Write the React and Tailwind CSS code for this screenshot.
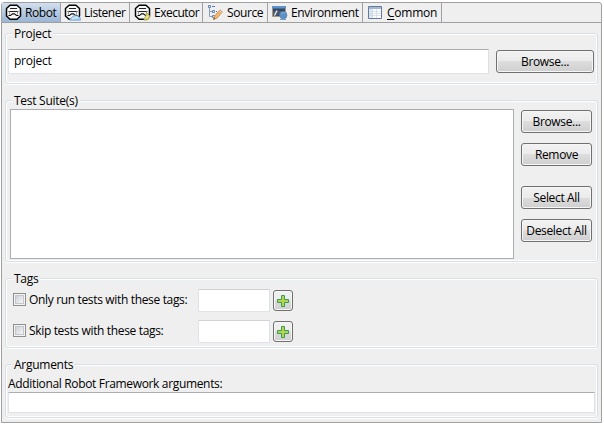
import React from "react";

function RobotIcon({ children }) {
  return (
    <svg width="17" height="17" viewBox="0 0 17 17" className="shrink-0">
      <path d="M5 1.200h7l3.500 3.300v7.500L12 15.300H5L1.500 12V4.500z" fill="#f8f8f8" stroke="#050505" strokeWidth="1.500" strokeLinejoin="round" />
      <path d="M5 4.500h7" stroke="#222" strokeWidth="1" fill="none" />
      <path d="M3.500 7.500h10" stroke="#222" strokeWidth="1" fill="none" />
      <path d="M4.500 7.500v3M12.500 7.500v3" stroke="#999" strokeWidth="1" fill="none" />
      <path d="M3.500 11.500h2l2-1.600h2l2 1.600h2" stroke="#111" strokeWidth="1.100" fill="none" />
      {children}
    </svg>
  );
}

const ListenerIcon = () => (
  <RobotIcon>
    <path d="M5.500 16.200c.4-2 1.800-2.600 3-3 .5-2 3.300-2.800 4.500-1 2-.2 3.500 1 3.500 4z" fill="#a9d2f4" stroke="#4d88c4" strokeWidth=".6" />
    <path d="M8 15c2-1 4-1.400 6-2" stroke="#e9f6ff" fill="none" />
  </RobotIcon>
);

const ExecutorIcon = () => (
  <RobotIcon>
    <path d="M12.500 8.500l3.500 3.500-1.500 3.500-4 .8-1-1.800 2-1.500z" fill="#d5cf6c" stroke="#8d8b3c" strokeWidth=".6" />
    <path d="M11.500 14l2.500-2" stroke="#fff8b8" />
  </RobotIcon>
);

const SourceIcon = () => (
  <svg width="16" height="17" viewBox="0 0 16 17" className="shrink-0">
    <path d="M2.500 4v8.500H5M2.500 7.500H5" fill="none" stroke="#8a9cb6" />
    <g fill="#e8f1fb" stroke="#6486b6">
      <path d="M1.500 1.500h2v2h-2zM5.500 6.500h2v2h-2zM5.500 11.500h2v2h-2z" />
    </g>
    <path d="M5 2.500h3M9 7.500h1" stroke="#5478ad" />
    <path d="M6.500 15.500l1-3.500L13 5.900l2.400 2L9.900 14.300z" fill="#f4b56c" stroke="#c9854a" strokeWidth=".8" />
    <path d="M6.500 15.500l.5-1.800 1.300 1z" fill="#443" />
    <path d="M12.300 6.600l2.400 2.100" stroke="#e9d8cc" />
  </svg>
);

const EnvironmentIcon = () => (
  <svg width="16" height="17" viewBox="0 0 16 17" className="shrink-0">
    <path d="M.5 2.500h13v10H.5z" fill="#34495f" stroke="#a9987c" />
    <path d="M0 2h14v2.500H0z" fill="#5c93cd" />
    <path d="M1 12V7h11L4 12z" fill="#4c5c70" />
    <path d="M2.500 11.500l2.500-5" stroke="#eef4fa" strokeWidth="1.200" />
    <circle cx="11.300" cy="11.200" r="3.700" fill="#5c8fc6" stroke="#5584b6" strokeWidth=".6" />
    <path d="M9 10c1-1.500 3-1.800 4-.8" stroke="#8fb6de" fill="none" />
    <path d="M8 15.500h6" stroke="#7d9dc0" />
  </svg>
);

const CommonIcon = () => (
  <svg width="15" height="15" viewBox="0 0 15 15" className="shrink-0">
    <path d="M.5 1.500h13v12H.5z" fill="#fff" stroke="#64799b" />
    <path d="M1 2h12v2H1z" fill="#a3b6d2" />
    <path d="M1 4h3v9H1z" fill="#dce7f4" />
    <path d="M4.500 4v9M1 6.500h12M1 8.500h12M1 10.500h12M8.500 4v9" stroke="#c9d4e1" strokeWidth=".7" />
  </svg>
);

const PlusIcon = () => (
  <svg width="12" height="12" viewBox="0 0 12 12" className="shrink-0">
    <path d="M4.500 .5h3v4h4v3h-4v4h-3v-4h-4v-3h4z" fill="#b4d64a" stroke="#3b9a5c" strokeWidth="1" />
  </svg>
);

function Tab({ icon, children, className }) {
  return (
    <div className={`flex h-[19px] shrink-0 items-center border-r border-[#a0a0a0] ${className}`}>
      {icon}
      <span className="whitespace-nowrap">{children}</span>
    </div>
  );
}

function Group({ title, className, children }) {
  return (
    <fieldset className={`relative w-[593px] shrink-0 rounded-[3px] border border-[#d5dfe5] shadow-[inset_0_0_0_1px_#fff,0_1px_0_#fff] ${className}`}>
      <span className="absolute -top-2 left-[6px] bg-[#efefef] px-[2px] leading-4 tracking-[-0.27px] whitespace-nowrap">{title}</span>
      {children}
    </fieldset>
  );
}

function Button({ children, className }) {
  return (
    <button className={`flex h-[23px] shrink-0 items-center justify-center rounded-[3px] border border-[#707070] bg-[linear-gradient(#f2f2f2_0%,#ebebeb_50%,#dddddd_50%,#cfcfcf_100%)] whitespace-nowrap shadow-[inset_0_0_0_1px_#f6f6f6] ${className}`}>
      {children}
    </button>
  );
}

function Field({ children, className }) {
  return (
    <div className={`flex shrink-0 items-center rounded-[1px] border border-[#e2e3ea] border-t-[#abadb3] border-r-[#dbdfe6] bg-white ${className}`}>
      {children}
    </div>
  );
}

function TagRow({ label }) {
  return (
    <div className="flex h-[23px] items-center">
      <span className="-mt-[2px] ml-[7px] flex h-[13px] w-[13px] items-center justify-center border border-[#8e8f8f] bg-[#f4f4f4]">
        <span className="h-[9px] w-[9px] border border-[#c3c7cc] bg-linear-to-br from-[#cdd1d8] to-[#f6f6f6]" />
      </span>
      <span className="-mt-px ml-[3px] w-[169px] whitespace-nowrap">{label}</span>
      <Field className="h-[23px] w-[72px] border-t-[#d0d2d8]" />
      <Button className="ml-[3px] !h-[21px] w-5"><PlusIcon /></Button>
    </div>
  );
}

export default function App() {
  return (
    <div className="h-[426px] w-[604px] overflow-hidden bg-white pt-[2px] pl-px font-['Open_Sans','Noto_Sans',sans-serif] text-[12px] leading-4 tracking-[-0.34px] text-black">
      <div className="flex h-[421px] w-[601px] flex-col rounded-t-[3px] border border-[#a0a0a0] bg-[#efefef]">
        <div className="flex h-5 shrink-0 border-b border-[#a0a0a0] tracking-[-0.4px]">
          <Tab className="w-[59px] gap-[3px] bg-linear-to-b from-[#d3dfee] to-[#9ab5d5] pl-[3px]" icon={<RobotIcon />}>Robot</Tab>
          <Tab className="w-[69px] gap-[3px] pl-[3px] tracking-[-0.45px]" icon={<ListenerIcon />}>Listener</Tab>
          <Tab className="w-[73px] gap-[3px] pl-1 tracking-[-0.5px]" icon={<ExecutorIcon />}>Executor</Tab>
          <Tab className="w-[65px] gap-1 pl-1" icon={<SourceIcon />}>Source</Tab>
          <Tab className="w-[95px] gap-[3px] pl-1" icon={<EnvironmentIcon />}>Environment</Tab>
          <Tab className="w-[79px] gap-1 pl-[5px] tracking-[-0.25px]" icon={<CommonIcon />}><span className="underline underline-offset-2">C</span>ommon</Tab>
        </div>
        <div className="flex flex-col gap-4 pt-[10px] pl-[3px]">
          <Group title="Project" className="h-[51px]">
            <div className="flex gap-[7px] pt-[15px] pl-[2px]">
              <Field className="h-[25px] w-[481px] pb-[2px] pl-[5px] tracking-[-0.25px]">project</Field>
              <Button className="mt-px w-[98px]">Browse...</Button>
            </div>
          </Group>
          <Group title="Test Suite(s)" className="h-[162px]">
            <div className="flex gap-[7px] pt-[8px] pl-[4px]">
              <div className="h-[150px] w-[504px] shrink-0 border border-[#abadb3] bg-white" />
              <div className="flex flex-col pt-px">
                <Button className="w-[71px]">Browse...</Button>
                <Button className="mt-[10px] w-[71px]">Remove</Button>
                <Button className="mt-5 w-[71px]">Select All</Button>
                <Button className="mt-[10px] w-[71px]">Deselect All</Button>
              </div>
            </div>
          </Group>
          <Group title="Tags" className="h-[70px]">
            <div className="flex flex-col gap-2 pt-[10px]">
              <TagRow label="Only run tests with these tags:" />
              <TagRow label="Skip tests with these tags:" />
            </div>
          </Group>
          <Group title="Arguments" className="h-[54px]">
            <div className="flex flex-col pt-[11px] pl-[2px]">
              <span className="h-4 whitespace-nowrap">Additional Robot Framework arguments:</span>
              <Field className="h-[21px] w-[587px]" />
            </div>
          </Group>
        </div>
      </div>
    </div>
  );
}
